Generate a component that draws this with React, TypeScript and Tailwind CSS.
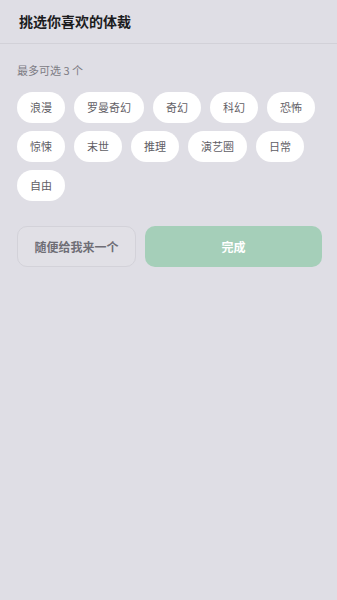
import React from 'react';

const genres = ['浪漫', '罗曼奇幻', '奇幻', '科幻', '恐怖', '惊悚', '末世', '推理', '演艺圈', '日常', '自由'];

const App: React.FC = () => {
  return (
    <div
      className="min-h-[600px] w-full bg-[#dfdee5] text-[#222]"
      style={{ fontFamily: '"Noto Sans CJK SC", "Noto Sans", sans-serif' }}
    >
      {/* Header */}
      <div className="h-[44px] flex items-center px-[19px] border-b border-[#d2d1d8]">
        <h1 className="text-[14px] font-bold text-[#1c1c1e]">挑选你喜欢的体裁</h1>
      </div>

      <div className="pl-[17px] pr-[15px] pt-[17px]">
        <p className="text-[11px] text-[#7d7c84] leading-[18px]">最多可选 3 个</p>

        <div className="mt-[13px] flex flex-wrap gap-x-[9px] gap-y-[8px]">
          {genres.map((g) => (
            <button
              key={g}
              className="h-[31px] px-[13px] rounded-full bg-white text-[11px] text-[#5f5e65] flex items-center"
            >
              {g}
            </button>
          ))}
        </div>

        <div className="mt-[25px] flex gap-[9px]">
          <button className="w-[119px] h-[41px] rounded-[10px] border border-[#d3d2d9] bg-[#e1e0e6] text-[12px] font-bold text-[#6f6e76]">
            随便给我来一个
          </button>
          <button className="flex-1 h-[41px] rounded-[10px] bg-[#a5cfb9] text-[12px] font-bold text-white">
            完成
          </button>
        </div>
      </div>
    </div>
  );
};

export default App;
